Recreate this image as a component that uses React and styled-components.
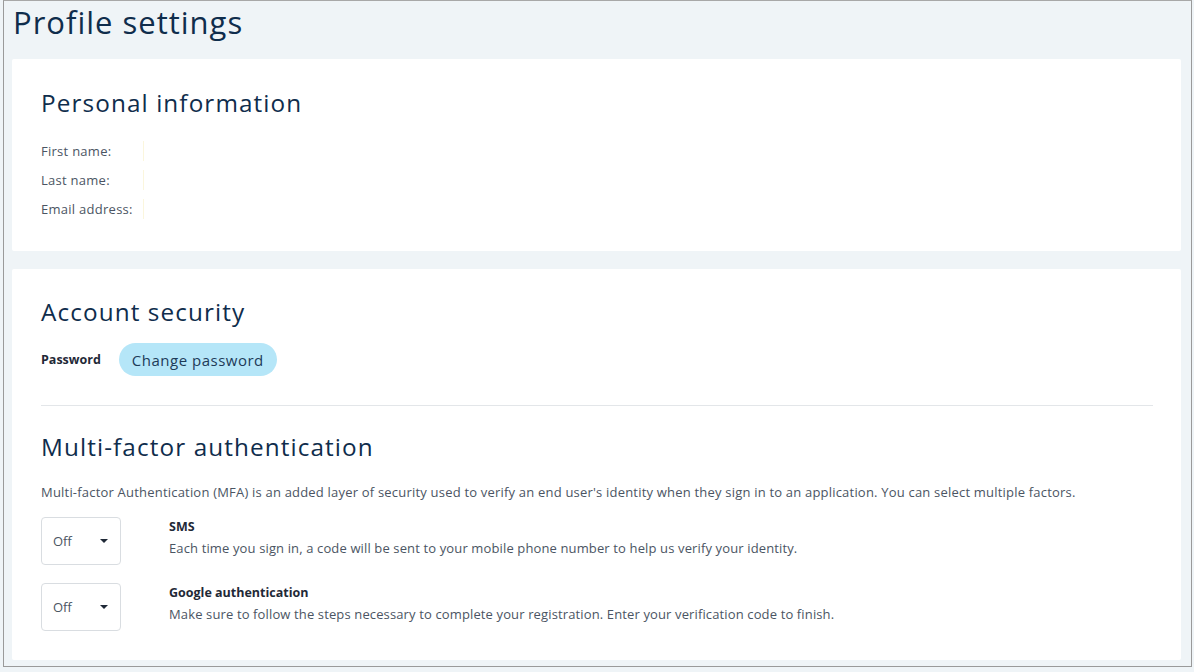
import React from 'react';
import styled, {createGlobalStyle} from 'styled-components';

const colors = {
  page: '#eff4f7',
  frame: '#9a9a9a',
  navy: '#0f2d4c',
  text: '#4b5563',
  label: '#1f2937',
  divider: '#e3e6e9',
  pill: '#b5e6f8',
  border: '#d9dde1'
};

const font = "'Open Sans', 'Noto Sans', Arial, sans-serif";

const GlobalStyle = createGlobalStyle`
  html, body {
    margin: 0;
    padding: 0;
    background: ${colors.page};
    font-family: ${font};
  }
`;

const Frame = styled.div`
  margin-left: 3px;
  width: 1189px;
  height: 667px;
  box-sizing: border-box;
  border: 1px solid ${colors.frame};
  border-top-color: #a8a8a8;
  background: ${colors.page};
  display: flex;
  flex-direction: column;
  padding: 0 10px 0 8px;
`;

const PageTitle = styled.h1`
  margin: 0;
  height: 58px;
  padding: 1px 0 0 1px;
  box-sizing: border-box;
  font-size: 31px;
  font-weight: 400;
  letter-spacing: 1px;
  line-height: 40px;
  color: ${colors.navy};
`;

const Card = styled.section`
  background: #fff;
  border-radius: 2px;
  padding: ${({pad}) => pad};
  height: ${({h}) => h};
  box-sizing: border-box;
  display: flex;
  flex-direction: column;
`;

const Gap = styled.div`
  height: 18px;
  flex: none;
`;

const SectionTitle = styled.h2`
  margin: 0 0 ${({mb}) => mb || '0'};
  font-size: 24.3px;
  font-weight: 400;
  letter-spacing: 1.1px;
  line-height: 32px;
  color: ${colors.navy};
`;

const InfoList = styled.dl`
  margin: 0;
  display: grid;
  grid-template-columns: max-content 1fr;
  row-gap: 9px;
  column-gap: 10px;
`;

const InfoLabel = styled.dt`
  font-size: 13px;
  letter-spacing: 0.27px;
  line-height: 20px;
  color: ${colors.text};
`;

const InfoValue = styled.dd`
  margin: 0;
  min-height: 20px;
  border-left: 1px solid #fbf6dd;
  width: 1px;
`;

const PasswordRow = styled.div`
  display: flex;
  align-items: center;
  gap: 18px;
`;

const BoldLabel = styled.span`
  font-size: 12.5px;
  font-weight: 700;
  color: ${colors.label};
`;

const PillButton = styled.button`
  height: 33px;
  padding: 0 13px;
  border: none;
  border-radius: 17px;
  background: ${colors.pill};
  color: #1d3b58;
  font-family: ${font};
  font-size: 15px;
  letter-spacing: 0.5px;
  cursor: pointer;
`;

const Divider = styled.hr`
  margin: 29px 0 25px;
  border: none;
  border-top: 1px solid ${colors.divider};
`;

const Description = styled.p`
  margin: 0 0 15px;
  font-size: 13px;
  letter-spacing: 0.2px;
  line-height: 20px;
  color: ${colors.text};
`;

const FactorList = styled.div`
  display: flex;
  flex-direction: column;
  gap: 18px;
`;

const FactorRow = styled.div`
  display: flex;
  align-items: flex-start;
  gap: 48px;
`;

const Select = styled.div`
  width: 80px;
  height: 48px;
  box-sizing: border-box;
  border: 1px solid ${colors.border};
  border-radius: 4px;
  display: flex;
  align-items: center;
  justify-content: space-between;
  padding: 0 12px 0 11px;
  font-size: 13px;
  color: ${colors.text};
`;

const Caret = styled.span`
  width: 0;
  height: 0;
  border-left: 4px solid transparent;
  border-right: 4px solid transparent;
  border-top: 4px solid #1f2937;
`;

const FactorText = styled.div`
  display: flex;
  flex-direction: column;
  gap: 1px;
`;

const FactorName = styled.span`
  font-size: 12.5px;
  font-weight: 700;
  line-height: 20px;
  color: ${colors.label};
`;

const FactorHint = styled.span`
  font-size: 13px;
  letter-spacing: 0.13px;
  line-height: 20px;
  color: ${colors.text};
`;

const factors = [
  {
    name: 'SMS',
    hint: 'Each time you sign in, a code will be sent to your mobile phone number to help us verify your identity.'
  },
  {
    name: 'Google authentication',
    hint: 'Make sure to follow the steps necessary to complete your registration. Enter your verification code to finish.'
  }
];

const App = () => (
  <>
    <GlobalStyle />
    <Frame>
      <PageTitle>Profile settings</PageTitle>
      <Card pad="28px 29px 0" h="192px">
        <SectionTitle mb="22px">Personal information</SectionTitle>
        <InfoList>
          <InfoLabel>First name:</InfoLabel>
          <InfoValue />
          <InfoLabel>Last name:</InfoLabel>
          <InfoValue />
          <InfoLabel>Email address:</InfoLabel>
          <InfoValue />
        </InfoList>
      </Card>
      <Gap />
      <Card pad="27px 28px 0 29px" h="391px">
        <SectionTitle mb="15px">Account security</SectionTitle>
        <PasswordRow>
          <BoldLabel>Password</BoldLabel>
          <PillButton>Change password</PillButton>
        </PasswordRow>
        <Divider />
        <SectionTitle mb="19px">Multi-factor authentication</SectionTitle>
        <Description>
          Multi-factor Authentication (MFA) is an added layer of security used to verify an end user's identity when they sign in to an application. You can select multiple factors.
        </Description>
        <FactorList>
          {factors.map((f) => (
            <FactorRow key={f.name}>
              <Select>
                Off
                <Caret />
              </Select>
              <FactorText>
                <FactorName>{f.name}</FactorName>
                <FactorHint>{f.hint}</FactorHint>
              </FactorText>
            </FactorRow>
          ))}
        </FactorList>
      </Card>
    </Frame>
  </>
);

export default App;
